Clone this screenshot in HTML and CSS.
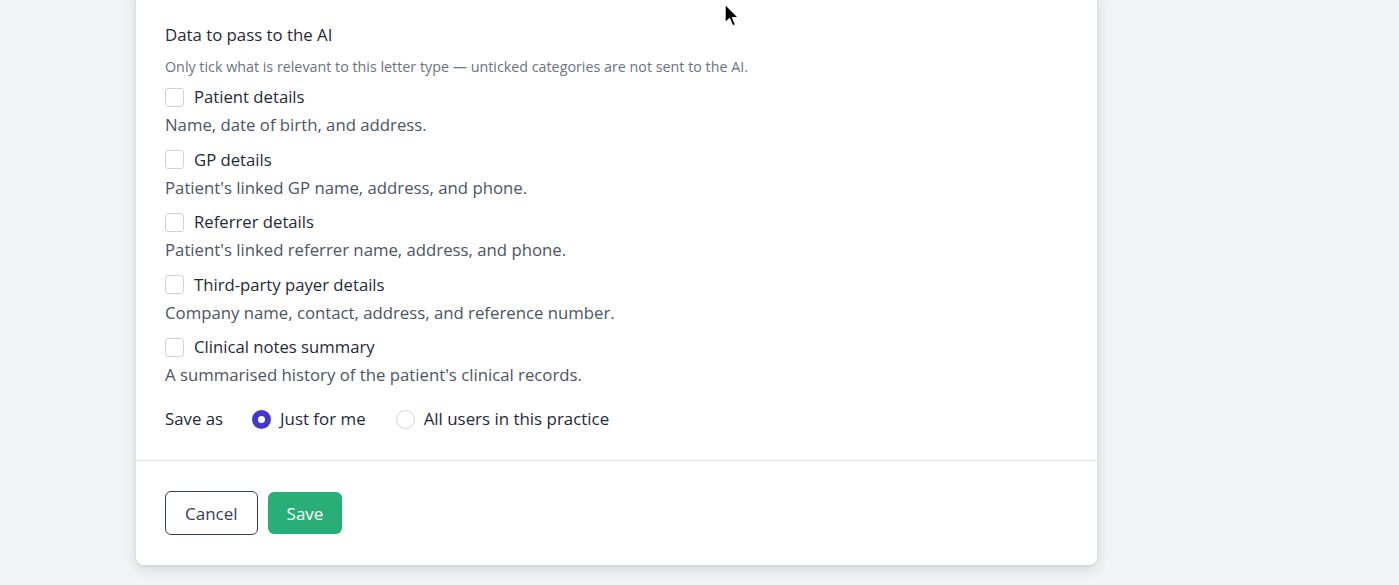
FILE: index.html
```html
<!DOCTYPE html>
<html lang="en">
<head>
    <meta charset="UTF-8">
    <meta name="viewport" content="width=device-width, initial-scale=1.0">
    <title>Letter type settings</title>
    <link rel="stylesheet" href="styles.css">
</head>
<body>
    <div class="modal">
        <div class="modal-body">
            <h2 class="section-title">Data to pass to the AI</h2>
            <p class="hint">Only tick what is relevant to this letter type — unticked categories are not sent to the AI.</p>

            <div class="options">
                <div class="option">
                    <label class="check"><input type="checkbox"> <span>Patient details</span></label>
                    <p class="desc">Name, date of birth, and address.</p>
                </div>
                <div class="option">
                    <label class="check"><input type="checkbox"> <span>GP details</span></label>
                    <p class="desc">Patient's linked GP name, address, and phone.</p>
                </div>
                <div class="option">
                    <label class="check"><input type="checkbox"> <span>Referrer details</span></label>
                    <p class="desc">Patient's linked referrer name, address, and phone.</p>
                </div>
                <div class="option">
                    <label class="check"><input type="checkbox"> <span>Third-party payer details</span></label>
                    <p class="desc">Company name, contact, address, and reference number.</p>
                </div>
                <div class="option">
                    <label class="check"><input type="checkbox"> <span>Clinical notes summary</span></label>
                    <p class="desc">A summarised history of the patient's clinical records.</p>
                </div>
            </div>

            <div class="save-as">
                <span class="save-label">Save as</span>
                <label class="radio"><input type="radio" name="scope" checked> <span>Just for me</span></label>
                <label class="radio"><input type="radio" name="scope"> <span>All users in this practice</span></label>
            </div>
        </div>

        <div class="modal-footer">
            <button class="btn btn-outline">Cancel</button>
            <button class="btn btn-primary">Save</button>
        </div>
    </div>

    <!-- mouse pointer -->
    <svg class="pointer" width="18" height="26" viewBox="0 0 18 26">
        <path d="M2 1 L2 20 L6.5 15.8 L9.6 23 L12.6 21.7 L9.6 14.6 L15.5 14.6 Z" fill="#000" stroke="#fff" stroke-width="1.4" stroke-linejoin="round"/>
    </svg>
</body>
</html>
```

FILE: styles.css
```css
body {
    margin: 0;
    background: #f2f3f5;
    font-family: 'Open Sans', 'Noto Sans', sans-serif;
    color: #1f2937;
    position: relative;
    height: 585px;
    overflow: hidden;
}

.modal {
    width: 961px;
    margin-left: 136px;
    margin-top: -12px;
    background: #fff;
    border-radius: 8px;
    box-shadow: 0 4px 14px rgba(0, 0, 0, 0.12), 0 1px 3px rgba(0, 0, 0, 0.08);
}

.modal-body {
    padding: 35px 29px 29px;
    border-bottom: 1px solid #e2e4ea;
}

.section-title {
    margin: 0;
    font-size: 16.8px;
    font-weight: 400;
    line-height: 24px;
    color: #1f2937;
}

.hint {
    margin: 10px 0 0;
    font-size: 14.3px;
    line-height: 20px;
    color: #6b7280;
}

.options {
    margin-top: 8px;
    display: flex;
    flex-direction: column;
    gap: 10.5px;
}

.check,
.radio {
    display: flex;
    align-items: center;
    gap: 10px;
    font-size: 16.7px;
    line-height: 24px;
    color: #1f2937;
    cursor: pointer;
}

.check input {
    appearance: none;
    width: 19px;
    height: 19px;
    margin: 0;
    border: 1px solid #cfd3da;
    border-radius: 3px;
    background: #fff;
}

.desc {
    margin: 4px 0 0;
    font-size: 16.75px;
    line-height: 24px;
    color: #4b5563;
}

.save-as {
    margin-top: 20px;
    display: flex;
    align-items: center;
}

.save-label {
    font-size: 16.8px;
    line-height: 24px;
    margin-right: 29px;
}

.radio {
    gap: 9px;
    margin-right: 30px;
    font-size: 16.9px;
}

.radio input {
    appearance: none;
    width: 19px;
    height: 19px;
    margin: 0;
    border: 1px solid #cfd3da;
    border-radius: 50%;
    background: #fff;
}

.radio input:checked {
    border: 6px solid #4338ca;
}

.modal-footer {
    padding: 30px 29px 30px;
    display: flex;
    gap: 10px;
    align-items: center;
}

.btn {
    font-family: inherit;
    font-size: 17px;
    height: 44px;
    border-radius: 6px;
    cursor: pointer;
}

.btn-outline {
    background: #fff;
    border: 1.5px solid #344054;
    color: #344054;
    padding: 0 19px;
}

.btn-primary {
    background: #2aae78;
    border: none;
    color: #fff;
    padding: 0 19px;
    height: 42px;
}

.pointer {
    position: absolute;
    left: 723px;
    top: 3px;
}
```
